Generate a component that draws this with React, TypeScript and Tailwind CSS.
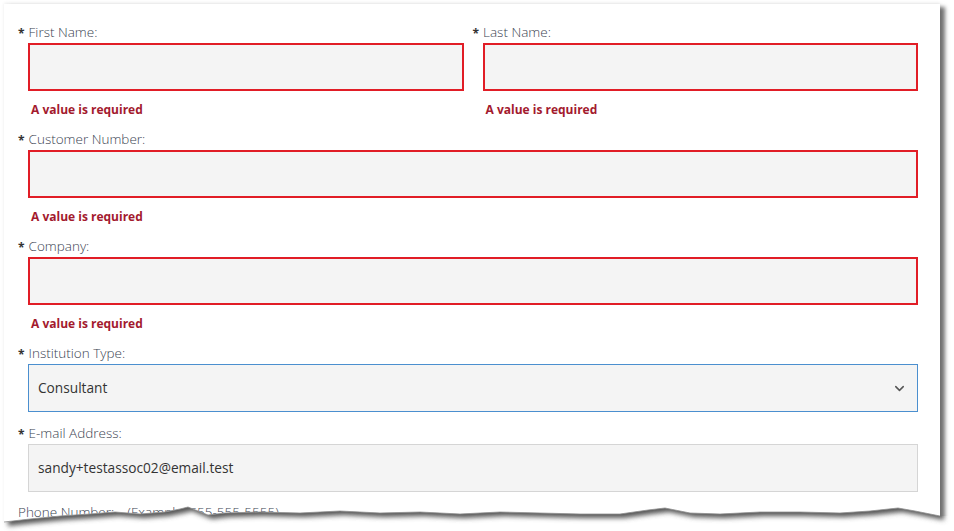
import React from 'react';
import { ChevronDown } from 'lucide-react';

// points along the torn bottom edge (page coords)
const TEAR: [number, number][] = [
  [4, 522], [30, 519], [60, 516], [90, 514], [115, 512], [140, 514], [165, 512],
  [180, 509], [188, 507], [198, 511], [208, 515], [225, 513], [260, 512], [300, 513],
  [340, 511], [380, 513], [420, 512], [460, 514], [500, 512], [540, 513], [580, 514],
  [620, 514], [648, 510], [665, 508], [690, 513], [720, 514], [760, 512], [800, 512],
  [840, 513], [870, 511], [898, 508], [915, 511], [940, 516],
];

const TOP = 470;

function TornEdge() {
  const pts = TEAR.map(([x, y]) => `${x},${y - TOP}`).join(' L');
  const back = TEAR.slice().reverse().map(([x, y]) => `${x},${y - TOP}`).join(' L');
  const lastY = TEAR[TEAR.length - 1][1] - TOP;
  const paper = `M4,-20 L940,-20 L940,${lastY} L${back} Z`;
  const paperWithShadowBand = `M4,-20 L952,-20 L952,${lastY} L${back} Z`;
  const outside = `M0,-20 L954,-20 L954,61 L0,61 Z ${paperWithShadowBand}`;
  return (
    <svg className="absolute left-0 top-[470px]" width={954} height={61} viewBox="0 0 954 61">
      <defs>
        <filter id="blur" x="-10%" y="-50%" width="120%" height="200%">
          <feGaussianBlur stdDeviation="2.6" />
        </filter>
        <clipPath id="below">
          <path d={outside} clipRule="evenodd" />
        </clipPath>
      </defs>
      <path d={outside} fill="#ffffff" fillRule="evenodd" />
      <g clipPath="url(#below)">
        <path d={paper} transform="translate(4,4)" fill="#555" filter="url(#blur)" />
      </g>
      <path d={`M${pts}`} fill="none" stroke="#8f8f8f" strokeWidth="0.8" />
    </svg>
  );
}

function Label({ text, required = true }: { text: string; required?: boolean }) {
  return (
    <div className="flex items-center h-4 gap-[4px]">
      {required && <span className="text-[12px] font-bold text-[#333] leading-none mt-[3px]">*</span>}
      <span className="text-[13.5px] font-light text-[#3a4351] leading-4">{text}</span>
    </div>
  );
}

function ErrorField({ label }: { label: string }) {
  return (
    <div className="flex flex-col">
      <Label text={label} />
      <div className="ml-[10px] mt-[3px] h-[48px] border-2 border-[#e11d26] bg-[#f4f4f4]" />
      <div className="ml-[13px] mt-[11px] mb-[13px] h-4 text-[12px] font-bold leading-4 text-[#a31a2e]">
        A value is required
      </div>
    </div>
  );
}

export default function App() {
  return (
    <div className="relative w-[954px] h-[531px] overflow-hidden bg-white" style={{ fontFamily: '"Open Sans", "Noto Sans", sans-serif' }}>
      <div className="ml-[4px] mt-[4px] w-[936px] h-[560px] bg-white shadow-[0_-1px_3px_rgba(0,0,0,0.08),5px_3px_4px_rgba(0,0,0,0.55)] pl-[14px] pr-[22px] pt-[20px]">
        <div className="grid grid-cols-2 gap-x-[9px]">
          <ErrorField label="First Name:" />
          <ErrorField label="Last Name:" />
        </div>
        <ErrorField label="Customer Number:" />
        <ErrorField label="Company:" />

        <Label text="Institution Type:" />
        <div className="ml-[10px] mt-[3px] h-[48px] border border-[#4b8fcf] bg-[#f4f4f4] flex items-center justify-between pl-[9px] pr-[10px]">
          <span className="text-[13.7px] text-[#333]">Consultant</span>
          <ChevronDown size={15} strokeWidth={2.4} className="text-[#555]" />
        </div>

        <div className="mt-[13px]">
          <Label text="E-mail Address:" />
        </div>
        <div className="ml-[10px] mt-[3px] h-[48px] border border-[#d5d5d5] bg-[#f4f4f4] flex items-center pl-[9px]">
          <span className="text-[13.7px] text-[#333]">sandy+testassoc02@email.test</span>
        </div>

        <div className="mt-[12px] flex items-center h-4 gap-[13px] text-[13.5px] font-light text-[#3a4351]">
          <span>Phone Number:</span>
          <span>(Example: 555-555-5555)</span>
        </div>
      </div>
      <TornEdge />
    </div>
  );
}
